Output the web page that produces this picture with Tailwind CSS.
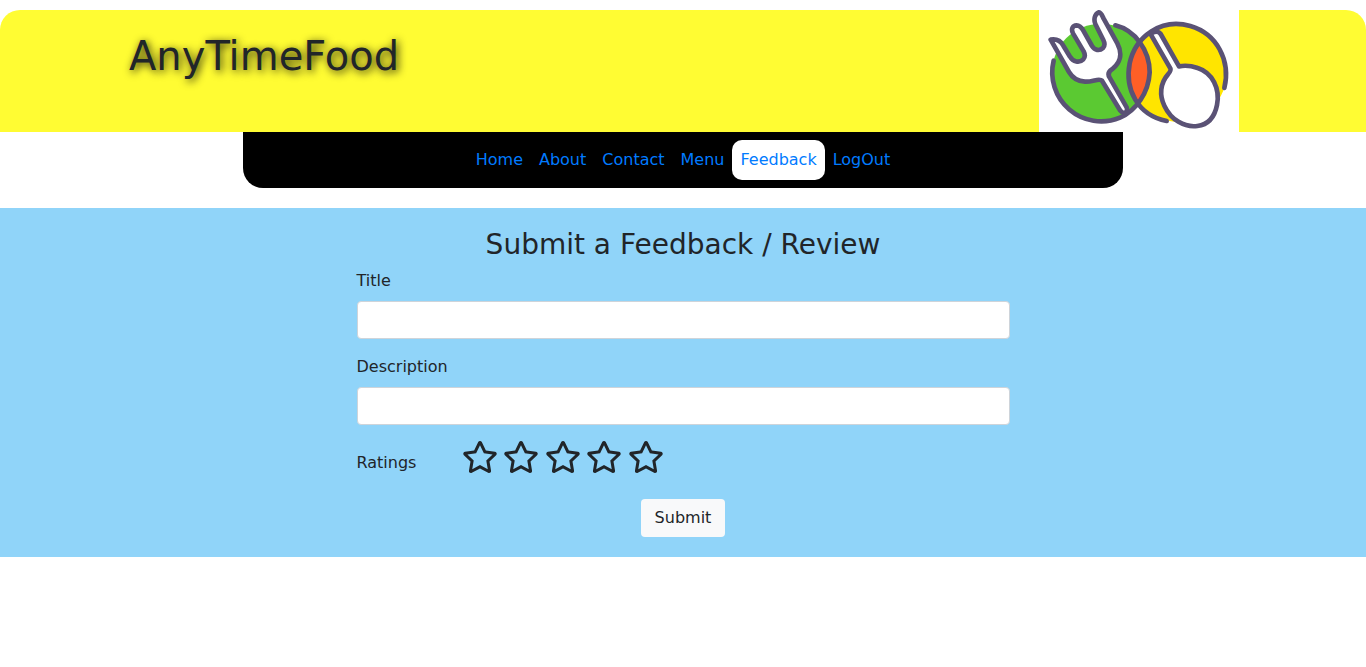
<!DOCTYPE html>
<html lang="en">
<head>
<meta charset="utf-8">
<meta name="viewport" content="width=device-width, initial-scale=1">
<title>AnyTimeFood</title>
<script src="https://cdn.jsdelivr.net/npm/@tailwindcss/browser@4"></script>
</head>
<body class="bg-white pt-[10px] font-['Verdana','DejaVu_Sans',sans-serif] text-base text-[#212529]">
<header class="rounded-t-[20px] bg-[#fffc33]">
  <div class="mx-auto flex max-w-[1112px] items-start justify-between">
    <h1 class="pt-[22px] pl-0.5 text-[40px] leading-[48px] [text-shadow:2px_2px_8px_rgba(0,0,0,0.9)]">AnyTimeFood</h1>
    <svg class="h-[122px] w-[200px] shrink-0 bg-white" viewBox="27 30 600 366" role="img" aria-label="Fork and spoon logo" fill="none" stroke="#5a5275" stroke-width="14" stroke-linecap="round" stroke-linejoin="round">
      <defs><clipPath id="lens"><circle cx="213" cy="218" r="147"/></clipPath></defs>
      <g stroke="none">
        <circle cx="213" cy="218" r="147" fill="#5bc932"/>
        <circle cx="443" cy="218" r="147" fill="#ffe500"/>
        <circle cx="443" cy="218" r="147" fill="#ff5f26" clip-path="url(#lens)"/>
      </g>
      <path fill="#fff" d="M62 119C80 116 91 121 100 137L120 170C129 186 148 190 160 178C167 170 165 162 161 154L129 100C122 85 129 77 140 76C150 76 155 83 160 92L186 138C194 151 208 154 219 144C226 136 224 128 220 120L196 72C190 57 195 42 206 37C213 36 217 48 221 56L262 130C279 163 270 190 246 208C235 215 233 223 239 233L290 322C295 338 280 344 271 332L216 242C208 233 189 246 165 245C143 244 127 233 117 216Z"/>
      <path d="M71 182A147 147 0 0 0 270 353C318 332 356 278 359 217C359 150 315 91 256 76"/>
      <path fill="#fff" d="M364 106L421 205C424 211 419 217 414 223C390 250 388 286 403 317C423 360 464 383 502 378C535 374 554 350 561 315C571 266 547 218 503 204C486 198 463 196 447 199L392 102C383 90 362 96 364 106Z"/>
      <path d="M583 264C603 181 560 101 481 78C394 53 316 109 299 190C284 267 322 346 410 363"/>
    </svg>
  </div>
</header>
<nav class="mx-auto mb-5 max-w-[880px] rounded-b-[20px] bg-black py-2">
  <ul class="flex flex-wrap justify-center text-[#007bff]">
    <li><a href="#" class="block p-2">Home</a></li>
    <li><a href="#" class="block p-2">About</a></li>
    <li><a href="#" class="block p-2">Contact</a></li>
    <li><a href="#" class="block p-2">Menu</a></li>
    <li><a href="#" aria-current="page" class="block rounded-[10px] bg-white p-2">Feedback</a></li>
    <li><a href="#" class="block p-2">LogOut</a></li>
  </ul>
</nav>
<main class="bg-[#90d4f9] py-5">
  <form class="mx-auto w-1/2 px-[15px]">
    <h2 class="mb-2 text-center text-[28px] leading-[33px]">Submit a Feedback / Review</h2>
    <label for="title" class="mb-2 block">Title</label>
    <input id="title" type="text" class="mb-4 block h-[38px] w-full rounded border border-[#ced4da] bg-white px-3">
    <label for="description" class="mb-2 block">Description</label>
    <input id="description" type="text" class="mb-4 block h-[38px] w-full rounded border border-[#ced4da] bg-white px-3">
    <fieldset class="mb-6">
      <div class="flex items-start">
        <span id="ratings" class="w-[105px] shrink-0 pt-[10px]">Ratings</span>
        <svg class="hidden"><symbol id="star" viewBox="0 0 576 512"><path fill="currentColor" d="M528.1 171.5L382 150.2 316.7 17.8c-11.7-23.6-45.6-23.9-57.4 0L194 150.2 47.9 171.5c-26.2 3.8-36.7 36.1-17.7 54.6l105.7 103-25 145.5c-4.5 26.3 23.2 46 46.4 33.7L288 439.6l130.7 68.7c23.2 12.2 50.9-7.4 46.4-33.7l-25-145.5 105.7-103c19-18.5 8.5-50.8-17.7-54.6zM388.6 312.3l23.7 138.4L288 385.4l-124.3 65.3 23.7-138.4-100.6-98 139-20.2 62.2-126 62.2 126 139 20.2-100.6 98z"/></symbol></svg>
        <div class="flex w-[202px] justify-between" role="radiogroup" aria-labelledby="ratings">
          <label class="relative"><input class="sr-only" type="radio" name="rating" value="1" aria-label="1 star"><svg class="h-8 w-9"><use href="#star"/></svg></label>
          <label class="relative"><input class="sr-only" type="radio" name="rating" value="2" aria-label="2 stars"><svg class="h-8 w-9"><use href="#star"/></svg></label>
          <label class="relative"><input class="sr-only" type="radio" name="rating" value="3" aria-label="3 stars"><svg class="h-8 w-9"><use href="#star"/></svg></label>
          <label class="relative"><input class="sr-only" type="radio" name="rating" value="4" aria-label="4 stars"><svg class="h-8 w-9"><use href="#star"/></svg></label>
          <label class="relative"><input class="sr-only" type="radio" name="rating" value="5" aria-label="5 stars"><svg class="h-8 w-9"><use href="#star"/></svg></label>
        </div>
      </div>
    </fieldset>
    <button type="submit" class="mx-auto block h-[38px] rounded bg-[#f8f9fa] px-[14px]">Submit</button>
  </form>
</main>
</body>
</html>
